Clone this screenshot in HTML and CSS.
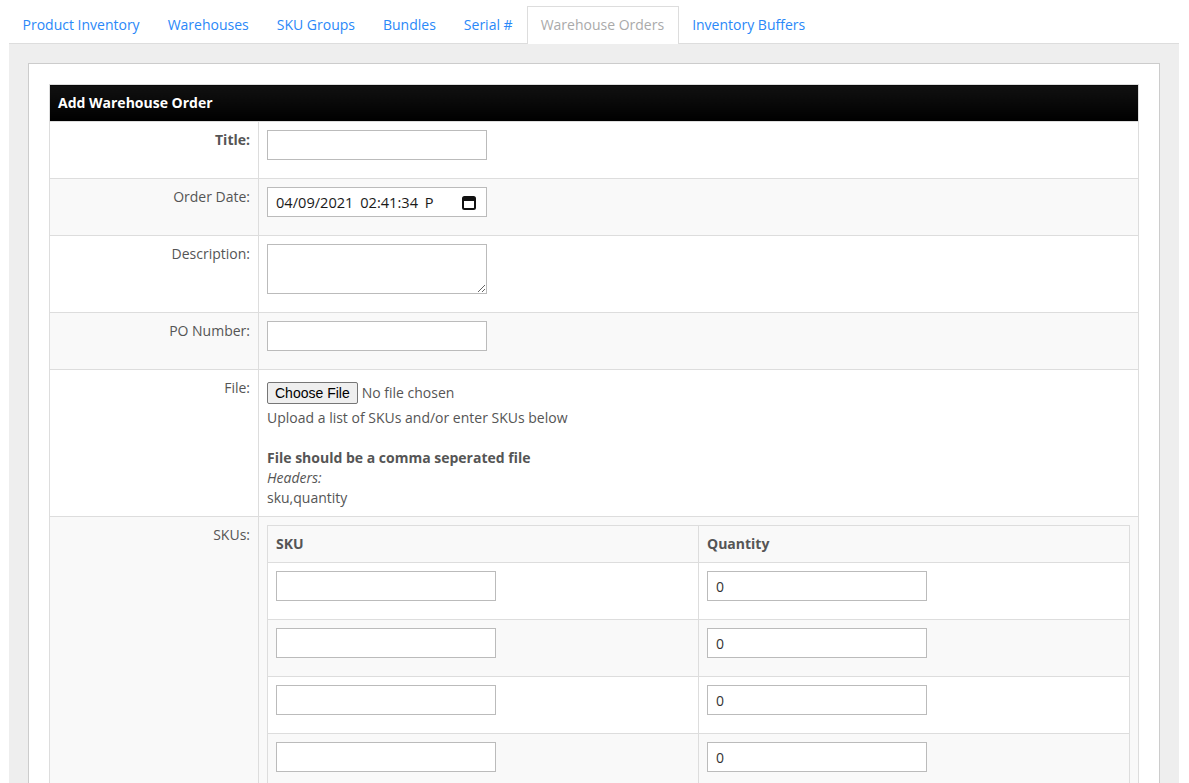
FILE: index.html
```html
<!DOCTYPE html>
<html lang="en">
<head>
    <meta charset="UTF-8">
    <meta name="viewport" content="width=device-width, initial-scale=1.0">
    <title>Warehouse Orders</title>
    <link rel="stylesheet" href="styles.css">
</head>
<body>
    <ul class="nav-tabs">
        <li><a href="#">Product Inventory</a></li>
        <li><a href="#">Warehouses</a></li>
        <li><a href="#">SKU Groups</a></li>
        <li><a href="#">Bundles</a></li>
        <li><a href="#">Serial #</a></li>
        <li class="active"><a href="#">Warehouse Orders</a></li>
        <li><a href="#">Inventory Buffers</a></li>
    </ul>

    <div class="tab-content">
        <div class="panel">
            <form>
                <table class="form-table">
                    <colgroup>
                        <col class="label-col">
                        <col>
                    </colgroup>
                    <thead>
                        <tr><th colspan="2">Add Warehouse Order</th></tr>
                    </thead>
                    <tbody>
                        <tr>
                            <td class="label"><strong>Title:</strong></td>
                            <td><input type="text" class="field"></td>
                        </tr>
                        <tr>
                            <td class="label">Order Date:</td>
                            <td>
                                <div class="field date-field">
                                    <span class="date-value">04/09/2021 02:41:34 P</span>
                                    <svg class="cal-icon" width="14" height="15" viewBox="0 0 14 15">
                                        <rect x="1" y="2" width="12" height="12" rx="1.5" fill="none" stroke="#111" stroke-width="2"/>
                                        <rect x="1" y="2" width="12" height="4" fill="#111"/>
                                    </svg>
                                </div>
                            </td>
                        </tr>
                        <tr>
                            <td class="label">Description:</td>
                            <td><textarea class="field area"></textarea></td>
                        </tr>
                        <tr>
                            <td class="label">PO Number:</td>
                            <td><input type="text" class="field"></td>
                        </tr>
                        <tr>
                            <td class="label">File:</td>
                            <td>
                                <input type="file" class="file-input">
                                <div class="help">
                                    Upload a list of SKUs and/or enter SKUs below<br><br>
                                    <strong>File should be a comma seperated file</strong><br>
                                    <em>Headers:</em><br>
                                    sku,quantity
                                </div>
                            </td>
                        </tr>
                        <tr>
                            <td class="label">SKUs:</td>
                            <td>
                                <table class="sku-table">
                                    <thead>
                                        <tr><th>SKU</th><th>Quantity</th></tr>
                                    </thead>
                                    <tbody>
                                        <tr><td><input type="text" class="field"></td><td><input type="text" class="field" value="0"></td></tr>
                                        <tr><td><input type="text" class="field"></td><td><input type="text" class="field" value="0"></td></tr>
                                        <tr><td><input type="text" class="field"></td><td><input type="text" class="field" value="0"></td></tr>
                                        <tr><td><input type="text" class="field"></td><td><input type="text" class="field" value="0"></td></tr>
                                        <tr><td><input type="text" class="field"></td><td><input type="text" class="field" value="0"></td></tr>
                                        <tr><td><input type="text" class="field"></td><td><input type="text" class="field" value="0"></td></tr>
                                    </tbody>
                                </table>
                            </td>
                        </tr>
                    </tbody>
                </table>
            </form>
        </div>
    </div>
</body>
</html>
```

FILE: styles.css
```css
body {
    margin: 0;
    padding: 0 10px 0 9px;
    font-family: "Open Sans", Arial, sans-serif;
    font-size: 14px;
    line-height: 20px;
    color: #555;
    background-color: #fff;
}

/* tabs */
.nav-tabs {
    display: flex;
    list-style: none;
    margin: 0;
    padding: 6px 0 0 0;
    border-bottom: 1px solid #ddd;
}

.nav-tabs li {
    margin-bottom: -1px;
}

.nav-tabs a {
    display: block;
    padding: 8px 13.5px 8px 12.5px;
    border: 1px solid transparent;
    border-bottom: none;
    color: #2a88f8;
    text-decoration: none;
}

.nav-tabs .active a {
    background-color: #fff;
    border-color: #ddd;
    color: #aaa;
    padding-bottom: 9px;
}

/* content area */
.tab-content {
    background-color: #eee;
    padding: 19px;
    min-height: 800px;
}

.panel {
    background-color: #fff;
    border: 1px solid #ccc;
    padding: 20px;
}

.form-table {
    width: 100%;
    border-collapse: collapse;
    table-layout: fixed;
    border: 1px solid #ddd;
}

.label-col {
    width: 209px;
}

.form-table > thead th {
    background: linear-gradient(#111, #000);
    color: #fff;
    text-align: left;
    font-weight: bold;
    padding: 8px;
}

.form-table > tbody > tr > td {
    border-top: 1px solid #ddd;
    padding: 8px;
    vertical-align: top;
}

.form-table > tbody > tr:nth-child(even) {
    background-color: #f9f9f9;
}

.form-table td.label {
    text-align: right;
    border-right: 1px solid #ddd;
}

.field {
    display: block;
    box-sizing: border-box;
    width: 220px;
    height: 30px;
    margin: 0 0 10px 0;
    padding: 0 8px;
    border: 1px solid #bbb;
    border-radius: 0;
    background-color: #fff;
    font-family: "Open Sans", Arial, sans-serif;
    font-size: 14px;
    color: #333;
}

.date-field {
    display: flex;
    align-items: center;
    justify-content: space-between;
    padding: 0 10px 0 8px;
    font-size: 14.6px;
    word-spacing: 3px;
    color: #1a1a1a;
    white-space: nowrap;
    overflow: hidden;
}

.cal-icon {
    flex-shrink: 0;
}

.area {
    height: 50px;
    padding: 4px 8px;
}

.file-input {
    display: block;
    margin: 4px 0 4px 0;
    font-family: "Open Sans", Arial, sans-serif;
    font-size: 14px;
    color: #555;
}

.file-input::file-selector-button {
    height: 22px;
    padding: 0 7px;
    margin-right: 4px;
    font-family: "Liberation Sans", Arial, sans-serif;
    font-size: 14px;
    color: #000;
    background-color: #efefef;
    border: 1px solid #767676;
    border-radius: 2px;
}

.help {
    color: #555;
}

/* sku list */
.sku-table {
    width: 100%;
    border-collapse: collapse;
    table-layout: fixed;
    border: 1px solid #ddd;
    background-color: #fff;
}

.sku-table th {
    background-color: #f9f9f9;
    text-align: left;
    font-weight: bold;
    padding: 8px;
    border-left: 1px solid #ddd;
}

.sku-table td {
    padding: 8px;
    border-top: 1px solid #ddd;
    border-left: 1px solid #ddd;
    vertical-align: top;
}

.sku-table tbody tr:nth-child(even) {
    background-color: #f9f9f9;
}
```
